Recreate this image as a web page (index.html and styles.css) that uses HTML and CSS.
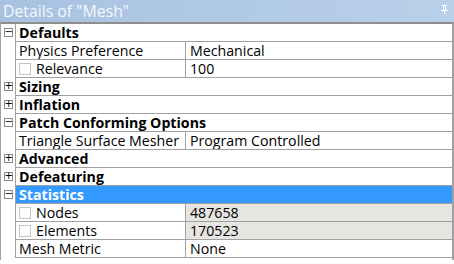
FILE: index.html
```html
<!DOCTYPE html>
<html lang="en">
<head>
  <meta charset="UTF-8">
  <title>Details of "Mesh"</title>
  <link rel="stylesheet" href="styles.css">
</head>
<body>

  <div class="panel">
    <div class="titlebar">
      <span>Details of "Mesh"</span>
      <svg class="pin" width="7" height="9" viewBox="0 0 7 9">
        <path d="M1 0h5v1H5v4h2v1H4v3H3V6H0V5h2V1H1z" fill="#fff"/>
        <path d="M3 1h1v4H3z" fill="#b5cce6"/>
      </svg>
    </div>

    <div class="grid">
      <div class="row group"><span class="exp"><i class="box">&minus;</i></span><span class="full">Defaults</span></div>
      <div class="row"><span class="exp"></span><span class="name">Physics Preference</span><span class="val">Mechanical</span></div>
      <div class="row"><span class="exp"></span><span class="name"><i class="chk"></i>Relevance</span><span class="val">100</span></div>
      <div class="row group"><span class="exp"><i class="box">+</i></span><span class="full">Sizing</span></div>
      <div class="row group"><span class="exp"><i class="box">+</i></span><span class="full">Inflation</span></div>
      <div class="row group"><span class="exp"><i class="box">&minus;</i></span><span class="full">Patch Conforming Options</span></div>
      <div class="row"><span class="exp"></span><span class="name">Triangle Surface Mesher</span><span class="val">Program Controlled</span></div>
      <div class="row group"><span class="exp"><i class="box">+</i></span><span class="full">Advanced</span></div>
      <div class="row group"><span class="exp"><i class="box">+</i></span><span class="full">Defeaturing</span></div>
      <div class="row group selected"><span class="exp"><i class="box">&minus;</i></span><span class="full">Statistics</span></div>
      <div class="row"><span class="exp"></span><span class="name"><i class="chk"></i>Nodes</span><span class="val readonly">487658</span></div>
      <div class="row"><span class="exp"></span><span class="name"><i class="chk"></i>Elements</span><span class="val readonly">170523</span></div>
      <div class="row"><span class="exp"></span><span class="name">Mesh Metric</span><span class="val">None</span></div>
    </div>
  </div>

</body>
</html>
```

FILE: styles.css
```css
body {
  margin: 0;
  background-color: #ffffff;
  font-family: 'Open Sans', sans-serif;
}

.panel {
  width: 454px;
  height: 264px;
  overflow: hidden;
}

.titlebar {
  height: 22px;
  display: flex;
  align-items: center;
  justify-content: space-between;
  padding: 0 6px 0 3px;
  box-sizing: border-box;
  background: linear-gradient(to right, #a7c2e1, #b9d0ea);
  color: #f4f8fc;
  font-size: 15.8px;
}

.pin {
  margin-top: -4px;
}

.grid {
  border-top: 2px solid #8e8e8e;
  border-left: 1px solid #a0a0a0;
  border-right: 2px solid #a0a0a0;
  height: 236px;
}

.row {
  display: flex;
  height: 18px;
  font-size: 14.2px;
  line-height: 18px;
  color: #000000;
}

.exp {
  width: 15px;
  flex: none;
  border-right: 1px solid #a0a0a0;
  display: flex;
  justify-content: center;
  padding-top: 4px;
  box-sizing: border-box;
}

.box {
  width: 9px;
  height: 9px;
  border: 1px solid #8a8a8a;
  box-sizing: border-box;
  font-style: normal;
  font-size: 10px;
  line-height: 6px;
  text-align: center;
  font-family: 'DejaVu Sans', sans-serif;
  color: #000000;
  background: #ffffff;
}

.full, .name, .val {
  border-bottom: 1px solid #a0a0a0;
  padding-left: 3px;
  white-space: nowrap;
  overflow: hidden;
  box-sizing: border-box;
}

.full {
  flex: 1;
  font-weight: bold;
}

.name {
  width: 170px;
  flex: none;
  border-right: 1px solid #a0a0a0;
  display: flex;
  align-items: center;
}

.val {
  flex: 1;
  padding-left: 4px;
}

.readonly {
  background-color: #e7e5e1;
}

.selected .full {
  background-color: #3399ff;
  color: #ffffff;
}

.chk {
  width: 12px;
  height: 12px;
  border: 1px solid #c4c4c4;
  box-sizing: border-box;
  margin-right: 5px;
  flex: none;
}
```
